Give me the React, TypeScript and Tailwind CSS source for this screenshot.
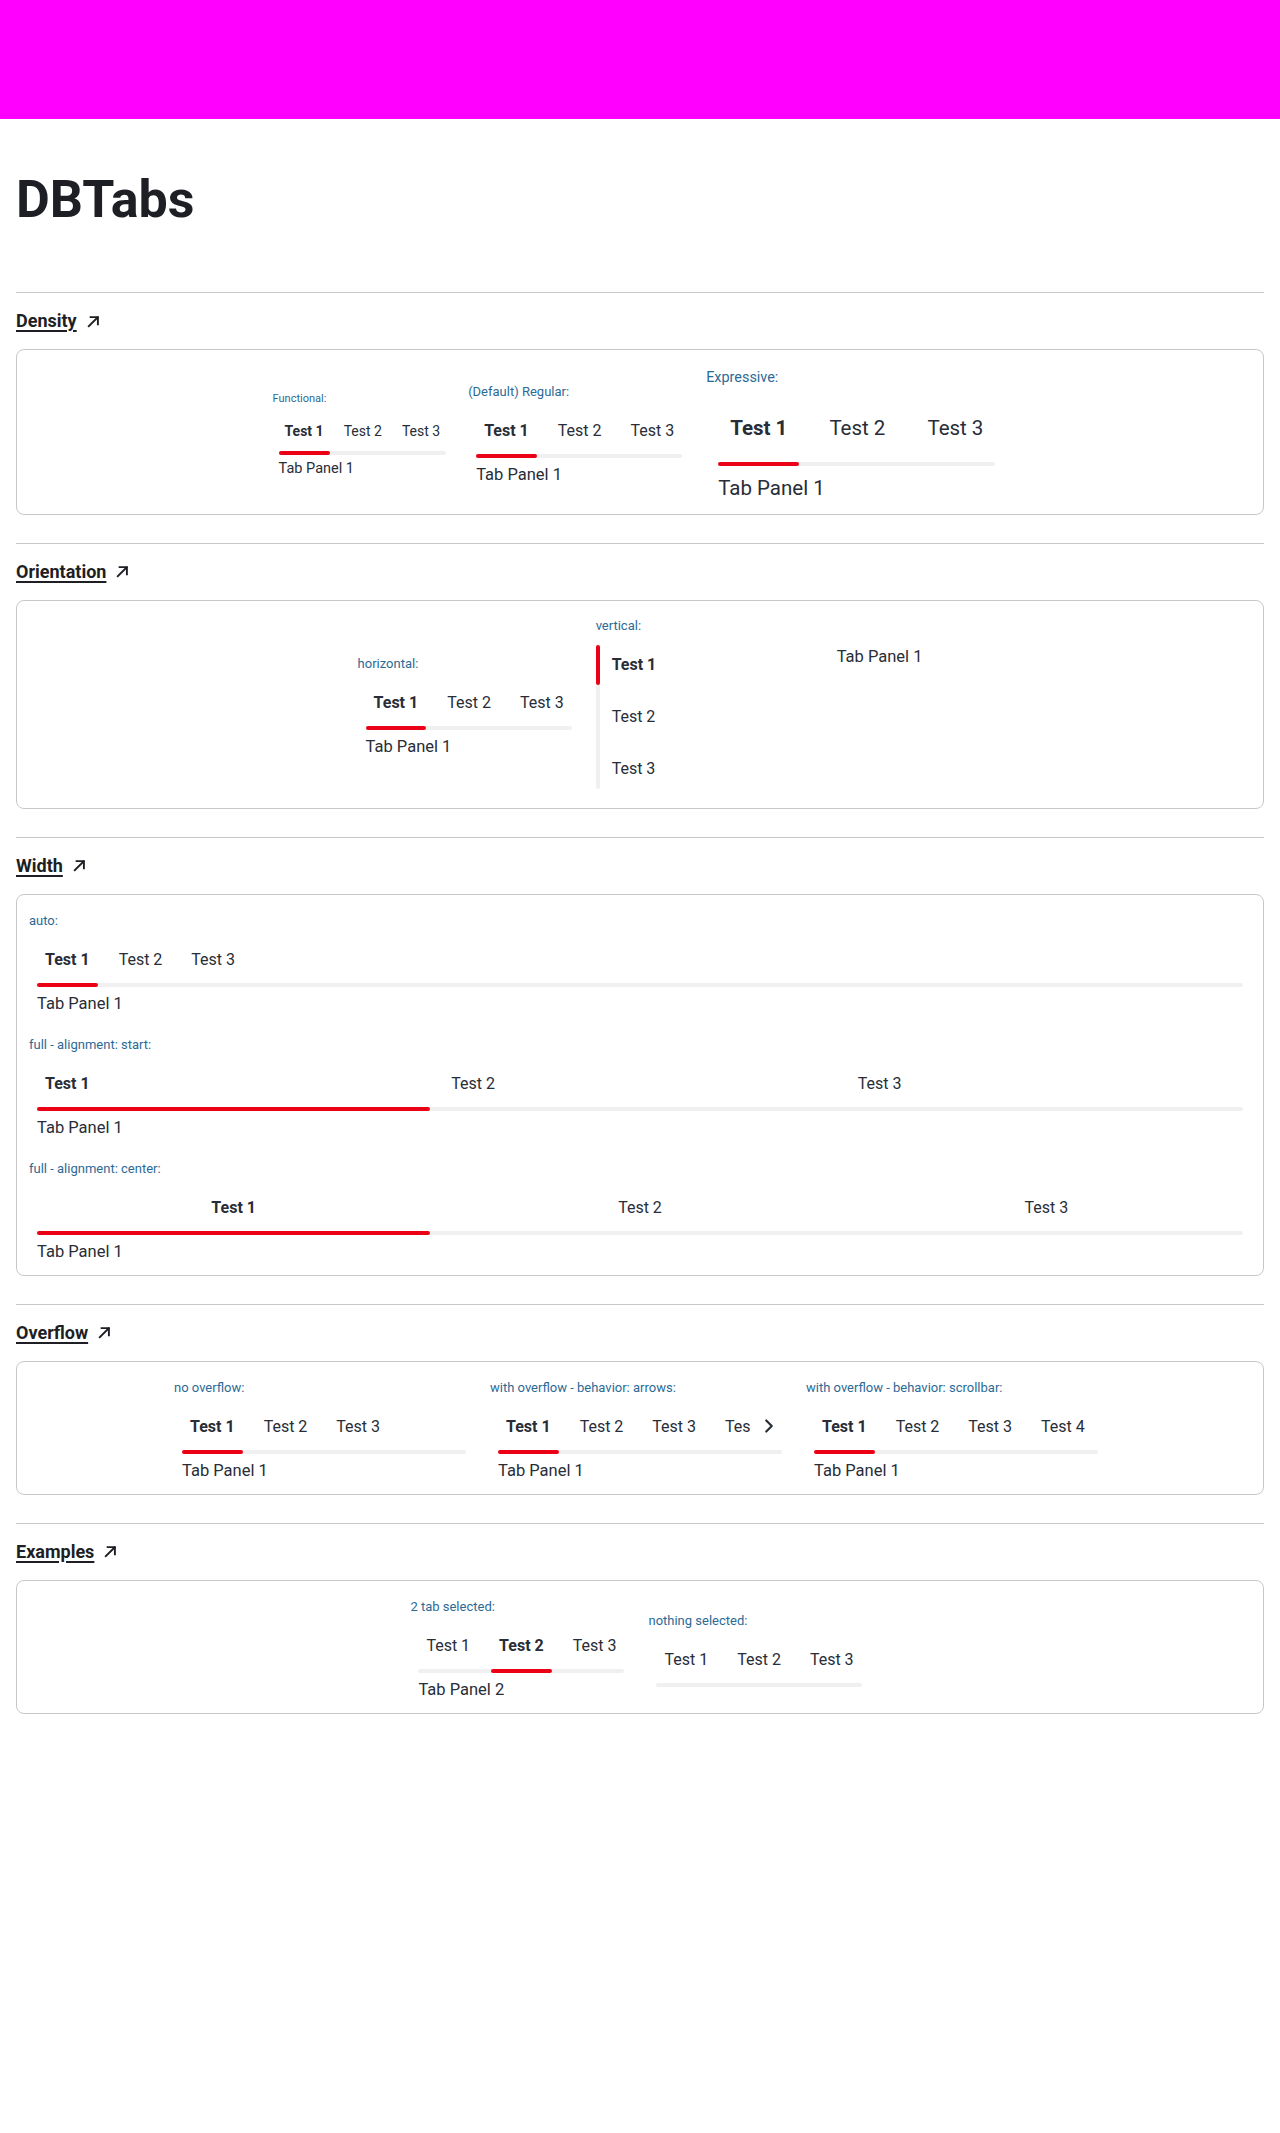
import React from 'react';

type Density = 'functional' | 'regular' | 'expressive';

const CFG: Record<Density, { label: string; pad: string; gap: string; tab: string; panel: string }> = {
  functional: {
    label: 'text-[11px] leading-4',
    pad: 'px-[6px] pt-[6px]',
    gap: 'gap-2',
    tab: 'px-[6px] pt-2 pb-[10px] text-[14px] leading-5',
    panel: 'mt-1 text-[14.5px] leading-5',
  },
  regular: {
    label: 'text-[13px] leading-[18px] mb-[2px]',
    pad: 'px-2 pt-2',
    gap: 'gap-[13px]',
    tab: 'px-2 pt-2 pb-[11.5px] text-[16px] leading-6',
    panel: 'mt-[4.5px] text-[16.5px] leading-6',
  },
  expressive: {
    label: 'text-[14.4px] leading-5 mb-[2px]',
    pad: 'px-3 pt-3',
    gap: 'gap-[18px]',
    tab: 'px-3 pt-3 pb-5 text-[20.5px] leading-7',
    panel: 'mt-[7.5px] text-[20.5px] leading-7',
  },
};

function Label({ density = 'regular', children }: { density?: Density; children: React.ReactNode }) {
  return <p className={`${CFG[density].label} text-[#2c6a96] whitespace-nowrap`}>{children}</p>;
}

function ChevronRight() {
  return (
    <svg width="22" height="22" viewBox="0 0 24 24" fill="none" stroke="#282d37" strokeWidth="2.4" strokeLinecap="round" strokeLinejoin="round">
      <path d="m9 18 6-6-6-6" />
    </svg>
  );
}

type TabsProps = {
  density?: Density;
  labels?: string[];
  active?: number;
  full?: boolean;
  center?: boolean;
  arrows?: boolean;
  panel?: string;
  className?: string;
};

function Tabs({
  density = 'regular',
  labels = ['Test 1', 'Test 2', 'Test 3'],
  active = 0,
  full = false,
  center = false,
  arrows = false,
  panel,
  className = '',
}: TabsProps) {
  const c = CFG[density];
  return (
    <div className={`${c.pad} ${className}`}>
      <div className={`relative flex ${c.gap} overflow-hidden`}>
        {labels.map((l, i) => (
          <div key={l} className={`flex flex-col ${full ? 'flex-1 min-w-0' : 'shrink-0'}`}>
            <span
              className={`${c.tab} whitespace-nowrap ${i === active ? 'font-bold' : 'font-normal'} ${
                center ? 'text-center' : 'text-left'
              }`}
            >
              {l}
            </span>
            <div className={`h-1 rounded-full ${i === active ? 'bg-[#ec0016]' : ''}`} />
          </div>
        ))}
        {arrows && (
          <div className="absolute right-0 top-0 bottom-1 w-[32px] bg-white pb-1 pr-[2px] flex items-center justify-end">
            <ChevronRight />
          </div>
        )}
      </div>
      <div className="-mt-1 h-1 rounded-full bg-[#f0f0f0]" />
      {panel && <div className={`${c.panel} whitespace-nowrap`}>{panel}</div>}
    </div>
  );
}

function Arrow() {
  return (
    <svg width="13" height="13" viewBox="0 0 13 13" fill="none" stroke="#1e1f24" strokeWidth="1.9" strokeLinecap="square">
      <path d="M1.8 11.2 L10.6 2.4" />
      <path d="M3.6 2.1 H10.9 V9.4" />
    </svg>
  );
}

function Section({ title, children, cardClass }: { title: string; children: React.ReactNode; cardClass: string }) {
  return (
    <section className="border-t border-[#c8c8c8] mb-7">
      <div className="mt-[14px] mb-[14px] h-7 flex items-center">
        <a className="text-[18px] leading-7 font-bold text-[#1e1f24] underline decoration-[1.5px] underline-offset-[3px]">
          {title}
        </a>
        <span className="ml-[10px] flex items-center">
          <Arrow />
        </span>
      </div>
      <div className={`rounded-lg border border-[#c8c8c8] ${cardClass}`}>{children}</div>
    </section>
  );
}

export default function App() {
  return (
    <div className="min-h-screen bg-white [font-family:Roboto,'Noto_Sans',sans-serif] text-[#282d37]">
      <header className="h-[119px] bg-[#ff00ff]" />
      <main className="px-4">
        <h1 className="mt-[50px] mb-[62px] text-[52px] leading-[61px] font-bold text-[#1e1f24]">DBTabs</h1>

        <Section title="Density" cardClass="flex justify-center items-center gap-4 pt-[18px] pb-3 px-3">
          <div className="flex flex-col">
            <Label density="functional">Functional:</Label>
            <Tabs density="functional" panel="Tab Panel 1" />
          </div>
          <div className="flex flex-col">
            <Label density="regular">(Default) Regular:</Label>
            <Tabs density="regular" panel="Tab Panel 1" />
          </div>
          <div className="flex flex-col">
            <Label density="expressive">Expressive:</Label>
            <Tabs density="expressive" panel="Tab Panel 1" />
          </div>
        </Section>

        <Section title="Orientation" cardClass="flex justify-center items-center gap-4 pt-4 pb-[11px] px-3">
          <div className="flex flex-col">
            <Label>horizontal:</Label>
            <Tabs panel="Tab Panel 1" />
          </div>
          <div className="flex flex-col">
            <Label>vertical:</Label>
            <div className="flex pt-2 pb-2">
              <div className="flex w-[241px] shrink-0">
                <div className="w-1 rounded-full bg-[#f0f0f0] flex flex-col">
                  <div className="h-10 rounded-full bg-[#ec0016]" />
                </div>
                <div className="flex flex-col gap-3 pl-3">
                  <div className="h-10 flex items-center text-[16px] leading-6 font-bold">Test 1</div>
                  <div className="h-10 flex items-center text-[16px] leading-6">Test 2</div>
                  <div className="h-10 flex items-center text-[16px] leading-6">Test 3</div>
                </div>
              </div>
              <div className="text-[16.5px] leading-6 whitespace-nowrap">Tab Panel 1</div>
            </div>
          </div>
        </Section>

        <Section title="Width" cardClass="flex flex-col gap-5 px-3 pt-[17px] pb-[11px]">
          <div className="flex flex-col">
            <Label>auto:</Label>
            <Tabs panel="Tab Panel 1" />
          </div>
          <div className="flex flex-col">
            <Label>full - alignment: start:</Label>
            <Tabs full panel="Tab Panel 1" />
          </div>
          <div className="flex flex-col">
            <Label>full - alignment: center:</Label>
            <Tabs full center panel="Tab Panel 1" />
          </div>
        </Section>

        <Section title="Overflow" cardClass="flex justify-center items-start gap-4 px-3 pt-[17px] pb-[11px]">
          <div className="flex flex-col w-[300px]">
            <Label>no overflow:</Label>
            <Tabs panel="Tab Panel 1" />
          </div>
          <div className="flex flex-col w-[300px]">
            <Label>with overflow - behavior: arrows:</Label>
            <Tabs arrows labels={['Test 1', 'Test 2', 'Test 3', 'Test 4']} panel="Tab Panel 1" />
          </div>
          <div className="flex flex-col w-[300px]">
            <Label>with overflow - behavior: scrollbar:</Label>
            <Tabs labels={['Test 1', 'Test 2', 'Test 3', 'Test 4']} panel="Tab Panel 1" />
          </div>
        </Section>

        <Section title="Examples" cardClass="flex justify-center items-center gap-4 px-3 pt-[17px] pb-[11px]">
          <div className="flex flex-col">
            <Label>2 tab selected:</Label>
            <Tabs active={1} panel="Tab Panel 2" />
          </div>
          <div className="flex flex-col">
            <Label>nothing selected:</Label>
            <Tabs active={-1} />
          </div>
        </Section>
      </main>
    </div>
  );
}
